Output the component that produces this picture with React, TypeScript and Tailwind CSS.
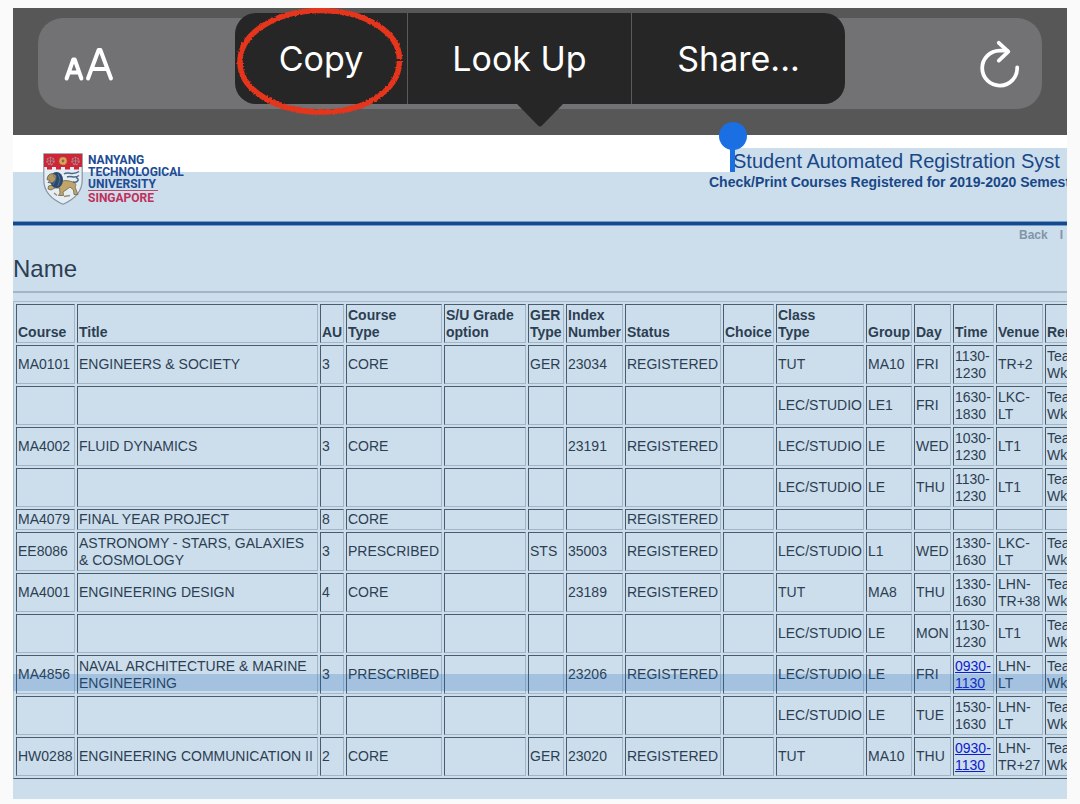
import React from "react";

type Cell = string;

interface Column {
  label: string;
  width: string;
}

const columns: Column[] = [
  { label: "Course", width: "w-[59px]" },
  { label: "Title", width: "w-[241px]" },
  { label: "AU", width: "w-[24px]" },
  { label: "Course\nType", width: "w-[96px]" },
  { label: "S/U Grade\noption", width: "w-[82px]" },
  { label: "GER\nType", width: "w-[36px]" },
  { label: "Index\nNumber", width: "w-[57px]" },
  { label: "Status", width: "w-[96px]" },
  { label: "Choice", width: "w-[51px]" },
  { label: "Class\nType", width: "w-[88px]" },
  { label: "Group", width: "w-[46px]" },
  { label: "Day", width: "w-[37px]" },
  { label: "Time", width: "w-[41px]" },
  { label: "Venue", width: "w-[47px]" },
  { label: "Rem", width: "w-auto" },
];

const TIME_COLUMN = 12;

interface Row {
  cells: Cell[];
  linked?: boolean;
  short?: boolean;
}

const REG = "REGISTERED";
const WEEKS = "Tea\nWk";

const rows: Row[] = [
  { cells: ["MA0101", "ENGINEERS & SOCIETY", "3", "CORE", "", "GER", "23034", REG, "", "TUT", "MA10", "FRI", "1130-\n1230", "TR+2", WEEKS] },
  { cells: ["", "", "", "", "", "", "", "", "", "LEC/STUDIO", "LE1", "FRI", "1630-\n1830", "LKC-\nLT", WEEKS] },
  { cells: ["MA4002", "FLUID DYNAMICS", "3", "CORE", "", "", "23191", REG, "", "LEC/STUDIO", "LE", "WED", "1030-\n1230", "LT1", WEEKS] },
  { cells: ["", "", "", "", "", "", "", "", "", "LEC/STUDIO", "LE", "THU", "1130-\n1230", "LT1", WEEKS] },
  { cells: ["MA4079", "FINAL YEAR PROJECT", "8", "CORE", "", "", "", REG, "", "", "", "", "", "", ""], short: true },
  { cells: ["EE8086", "ASTRONOMY - STARS, GALAXIES\n& COSMOLOGY", "3", "PRESCRIBED", "", "STS", "35003", REG, "", "LEC/STUDIO", "L1", "WED", "1330-\n1630", "LKC-\nLT", WEEKS] },
  { cells: ["MA4001", "ENGINEERING DESIGN", "4", "CORE", "", "", "23189", REG, "", "TUT", "MA8", "THU", "1330-\n1630", "LHN-\nTR+38", WEEKS] },
  { cells: ["", "", "", "", "", "", "", "", "", "LEC/STUDIO", "LE", "MON", "1130-\n1230", "LT1", WEEKS] },
  { cells: ["MA4856", "NAVAL ARCHITECTURE & MARINE\nENGINEERING", "3", "PRESCRIBED", "", "", "23206", REG, "", "LEC/STUDIO", "LE", "FRI", "0930-\n1130", "LHN-\nLT", WEEKS], linked: true },
  { cells: ["", "", "", "", "", "", "", "", "", "LEC/STUDIO", "LE", "TUE", "1530-\n1630", "LHN-\nLT", WEEKS] },
  { cells: ["HW0288", "ENGINEERING COMMUNICATION II", "2", "CORE", "", "GER", "23020", REG, "", "TUT", "MA10", "THU", "0930-\n1130", "LHN-\nTR+27", WEEKS], linked: true },
];

const cellBorder =
  "border border-t-[#485c70] border-l-[#485c70] border-r-[#a3b6c7] border-b-[#a3b6c7] p-px";

function TextSizeIcon() {
  return (
    <svg viewBox="0 0 50 36" className="h-9 w-[50px]" fill="none" stroke="white" strokeLinecap="round" strokeLinejoin="round" aria-hidden="true">
      <path d="M2.600 31.500 L9.300 12.500 H10.700 L17.400 31.500 M5 25.500 H15" strokeWidth="4" />
      <path d="M24 31.500 L34.600 3 H36.400 L47 31.500 M27.800 22 H43.200" strokeWidth="4" />
    </svg>
  );
}

function ReloadIcon() {
  return (
    <svg viewBox="0 0 40 48" className="h-12 w-10" fill="none" stroke="white" strokeWidth="3.8" strokeLinecap="round" strokeLinejoin="round" aria-hidden="true">
      <path d="M37.2 27.5 A17.5 17.5 0 1 1 19.6 10.6 H27" />
      <path d="M18.8 2.8 L28.3 11.7 L18.8 20.6" />
    </svg>
  );
}

function HandDrawnRing() {
  return (
    <svg viewBox="0 0 172 110" className="pointer-events-none absolute top-[-8px] left-0 h-[110px] w-[172px] overflow-visible" fill="none" aria-hidden="true">
      <filter id="crayon" x="-5%" y="-5%" width="110%" height="110%">
        <feTurbulence type="fractalNoise" baseFrequency="0.5" numOctaves="2" seed="4" />
        <feDisplacementMap in="SourceGraphic" scale="3" xChannelSelector="R" yChannelSelector="G" />
      </filter>
      <g filter="url(#crayon)" stroke="#e5341a">
        <path d="M164.500 54 C164 26 128 5.500 86 5.500 C41 5.500 5 28 5 57 C5 85 41 107 87 107 C131 107 164 85 164.500 56" strokeWidth="5.600" />
      </g>
    </svg>
  );
}

function Crest() {
  return (
    <svg viewBox="0 0 40 52" className="h-[52px] w-10 shrink-0" aria-hidden="true">
      <path d="M.8.8 H39.200 V27 C39.200 39 31 46.500 20 51.200 C9 46.500 .8 39 .8 27 Z" fill="#e6eef5" stroke="#8793a0" strokeWidth="1.200" />
      <path d="M1 1 H39 V14 H36 V16.500 H31 V14 H27 V16.500 H22 V14 H18 V16.500 H13 V14 H9 V16.500 H4 V14 H1 Z" fill="#cf2637" />
      <g fill="none" stroke="#a98a91" strokeWidth="1.500">
        <circle cx="7.500" cy="8" r="3.500" strokeDasharray="2 1" />
        <circle cx="32.500" cy="8" r="3.500" strokeDasharray="2 1" />
        <path d="M4 8 H11 M7.500 4.500 V11.500 M29 8 H36 M32.500 4.500 V11.500" strokeWidth=".8" />
      </g>
      <circle cx="20" cy="8" r="4" fill="#d9a85a" stroke="#b5523c" strokeDasharray="1.500 1" />
      <circle cx="20" cy="8" r="1.400" fill="#8d6a3a" />
      <path d="M19 28 C23 27 27 28 30 29 C33 30 33.500 32 32 34 L34 39 L35 41.500 H31 L30.500 37 L27 34 L23 37 L20 39 L20.500 42.500 H15.500 L17 40 L16.500 35 L12 35 L8 37 L5 36 L5.500 33 L10 32 Z" fill="#c3a468" stroke="#6d6750" strokeWidth=".8" />
      <ellipse cx="13.500" cy="27" rx="6.500" ry="8" fill="#29486f" />
      <path d="M5 23 C7 20 11 20 13 22.500 C14 26 11 29 9 30 L5 29.500 L7 27.500 L4 26.500 Z" fill="#b39a62" stroke="#52584f" strokeWidth=".8" />
      <path d="M10 22 L13 26 L10 32 M15 21 L17 26 L15 33" fill="none" stroke="#5f7594" strokeWidth=".9" />
      <path d="M21 21 C25 18 30 23 36 18.500 M24 24 C28 22 31 26 36 22.500 M30 29 C35 30 37 26 33 24.500" fill="none" stroke="#4b6787" strokeWidth="1.500" />
      <path d="M11 40 L14 42.500 M21 43.500 L27 42.500" stroke="#9a916f" strokeWidth="1.500" />
    </svg>
  );
}

function BrowserBar() {
  const item =
    "flex items-center justify-center pt-px font-[Inter,sans-serif] text-[34px] leading-10 text-white";
  return (
    <div className="relative z-10 bg-[#575757] px-[25px] pt-2.5 pb-[26px]">
      <div className="flex h-[91px] items-center justify-between rounded-[25px] bg-[#727274] pr-[22px] pl-[26px]">
        <button type="button" aria-label="Text size" className="pt-0.5">
          <TextSizeIcon />
        </button>
        <button type="button" aria-label="Reload">
          <ReloadIcon />
        </button>
      </div>
      <div className="absolute top-[5px] left-1/2 grid h-[91px] w-[610px] -translate-x-1/2 grid-cols-[172px_225px_1fr] rounded-[21px] bg-[#262626]">
        <button type="button" className={item}>Copy</button>
        <button type="button" className={`${item} border-x border-[#5b5b5b]`}>Look Up</button>
        <button type="button" className={item}>Share...</button>
        <HandDrawnRing />
        <svg viewBox="0 0 46 23" className="absolute top-full left-[282px] h-[23px] w-[46px]" aria-hidden="true">
          <path d="M0 0 H46 L25 21.500 Q23 23.500 21 21.500 Z" fill="#262626" />
        </svg>
      </div>
    </div>
  );
}

function PageHeader() {
  return (
    <header className="flex h-[86px] items-start justify-between bg-linear-to-b from-white from-[37px] to-[#ccddec] to-[37px] pl-[30px]">
      <div className="flex gap-[5px] pt-[18px]">
        <Crest />
        <div className="pt-px font-[Roboto,sans-serif] text-[12px] leading-3 font-bold text-[#204b93]">
          <p>NANYANG</p>
          <p>TECHNOLOGICAL</p>
          <p>UNIVERSITY</p>
          <p className="w-[70px] border-t border-[#b94869] pt-px whitespace-nowrap text-[#c0305a]">SINGAPORE</p>
        </div>
      </div>
      <div className="w-[358px] pt-[13px] whitespace-nowrap text-[#194887]">
        <div className="relative ml-6 bg-[#ccddec]">
          <h1 className="text-[20px] leading-[26px]">Student Automated Registration Syst</h1>
          <div className="absolute top-0 left-[-3px] z-20 h-6 w-[5px] bg-[#1a6fe3]" />
          <div className="absolute top-[-26px] left-[-14px] z-20 size-7 rounded-full bg-[#1a6fe3]" />
        </div>
        <p className="text-[14px] leading-4 font-bold">Check/Print Courses Registered for 2019-2020 Semest</p>
      </div>
    </header>
  );
}

function CourseTable() {
  return (
    <div className="relative overflow-hidden">
      <table className="w-[calc(100%+40px)] table-fixed border-separate border-spacing-[2px] border border-t-[#a9bccc] border-l-[#a9bccc] border-b-[#485c70] text-left text-[14px] leading-[17px] whitespace-pre">
        <colgroup>
          {columns.map((c) => (
            <col key={c.label} className={c.width} />
          ))}
        </colgroup>
        <thead>
          <tr className="h-[39px]">
            {columns.map((c) => (
              <th key={c.label} scope="col" className={`${cellBorder} align-bottom font-bold`}>
                {c.label}
              </th>
            ))}
          </tr>
        </thead>
        <tbody>
          {rows.map((row, r) => (
            <tr key={r} className={row.short ? "h-[21px]" : "h-[39px]"}>
              {row.cells.map((text, i) => (
                <td key={i} className={`${cellBorder} align-middle`}>
                  {row.linked && i === TIME_COLUMN ? (
                    <a href="#time" className="text-[#0d20cf] underline">{text}</a>
                  ) : (
                    text
                  )}
                </td>
              ))}
            </tr>
          ))}
        </tbody>
      </table>
      <div className="pointer-events-none absolute top-[373px] left-0 h-[17px] w-full bg-[#1765b5]/22" />
    </div>
  );
}

export default function App() {
  return (
    <div className="min-h-screen bg-[#fafafa] px-[13px] pt-2 pb-[5px] font-['Liberation_Sans',sans-serif]">
      <div className="overflow-hidden bg-[#ccddec] pb-5 text-[#2c3f52]">
        <BrowserBar />
        <div className="relative z-20">
          <PageHeader />
        </div>
        <div className="h-[5px] border-y border-[#6f9bd0] bg-[#164987]" />
        <nav className="flex justify-end gap-3 pr-1 text-[12px] leading-[18px] font-bold text-[#8195a8]">
          <a href="#back">Back</a>
          <span>I</span>
        </nav>
        <h2 className="pt-2.5 text-[24px] leading-[30px]">Name</h2>
        <hr className="mt-[7px] mb-2 border-t-2 border-[#a3b6c8]" />
        <CourseTable />
      </div>
    </div>
  );
}
